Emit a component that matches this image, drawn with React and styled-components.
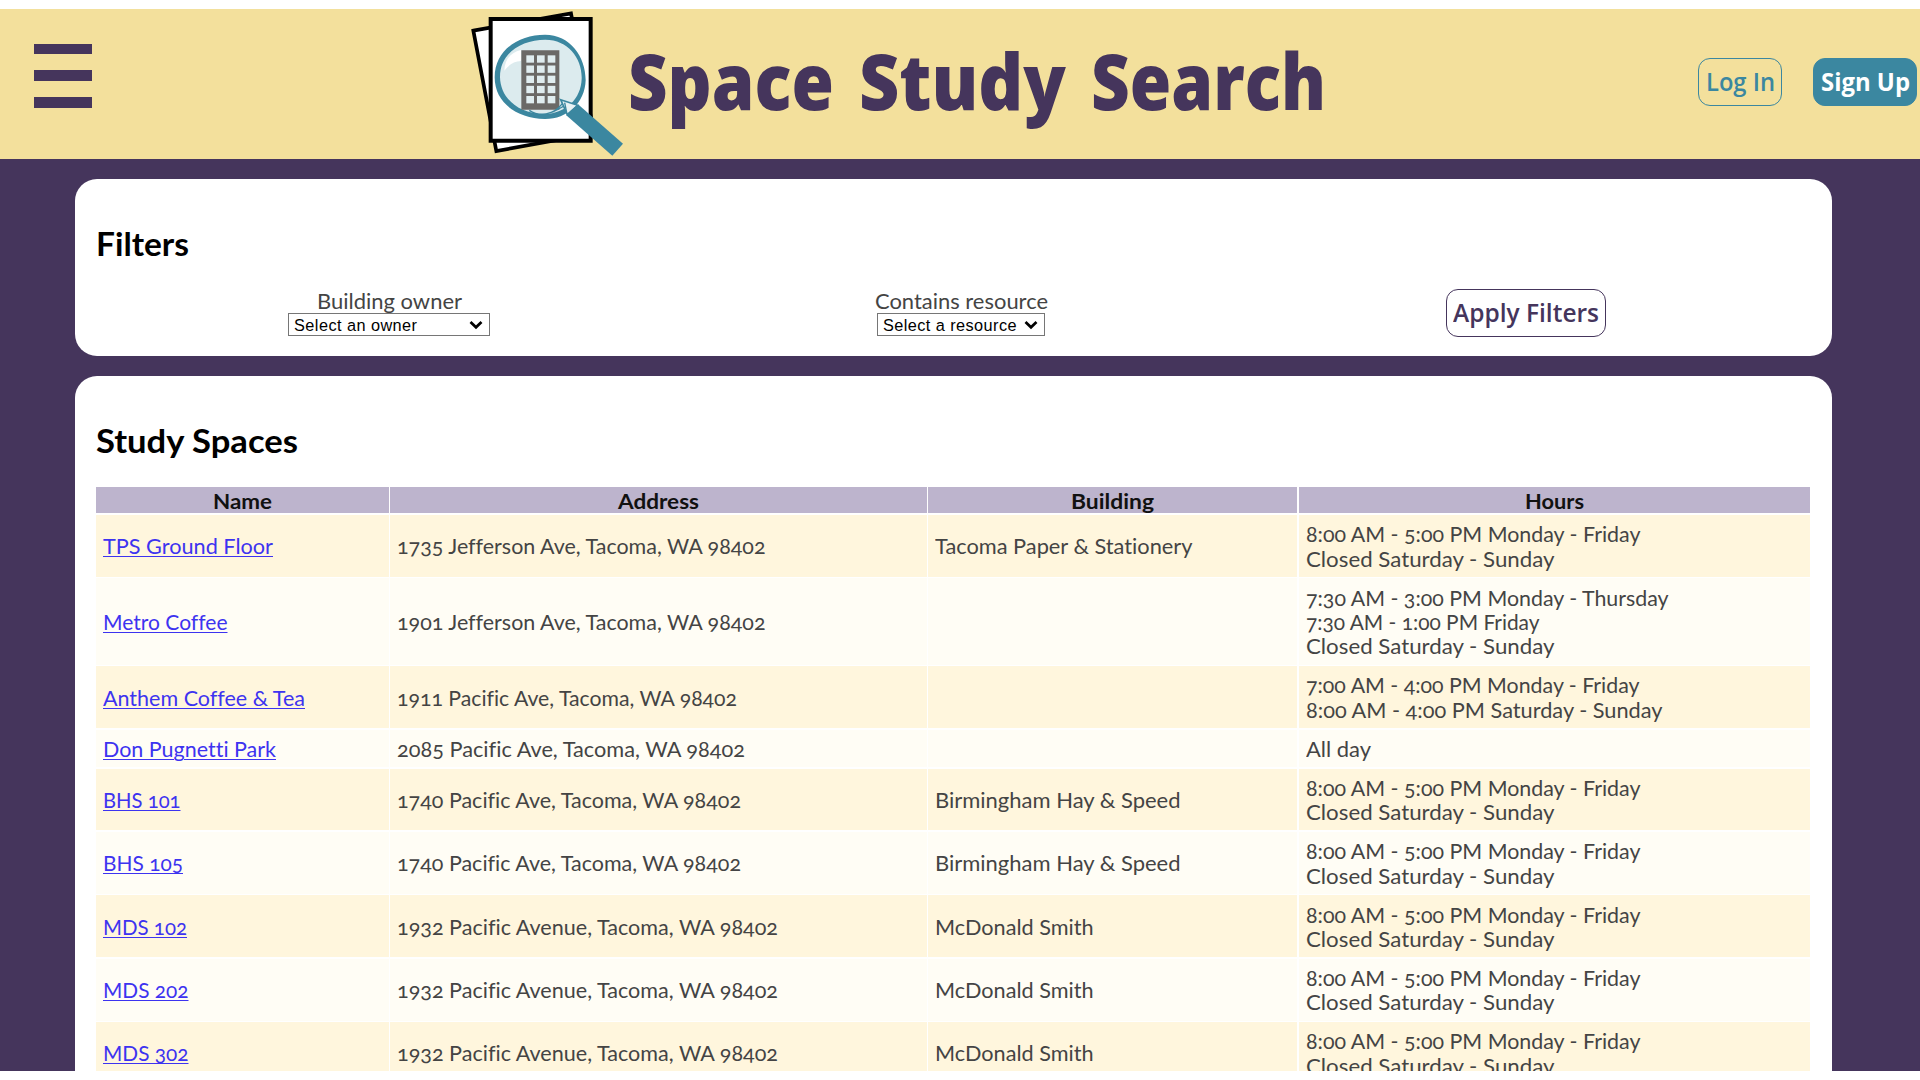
import React, { useLayoutEffect, useRef, useState } from "react";
import styled, { createGlobalStyle } from "styled-components";

const purple = "#45355c";
const teal = "#3b87a0";

const GlobalStyle = createGlobalStyle`
  * { box-sizing: border-box; }
  html, body { margin: 0; background: #fff; overflow: hidden; }
  body { font: 400 20.3px/24.4px Lato, "Liberation Sans", sans-serif; color: #444; font-variant-numeric: oldstyle-nums; font-variant-ligatures: no-common-ligatures; }
`;

const Page = styled.div`
  height: 1080px;
  padding: 9px 0;
  overflow: hidden;
`;

const Header = styled.header`
  display: flex;
  align-items: flex-start;
  height: 149.7px;
  background: #f3e09c;
`;

const MenuButton = styled.div`
  display: flex;
  flex-direction: column;
  justify-content: space-between;
  width: 58px;
  height: 64px;
  margin: 34.6px 0 0 34px;
`;

const MenuBar = styled.span`
  height: 10.3px;
  background: ${purple};
`;

const Logo = styled.svg`
  flex: none;
  width: 160px;
  height: 149px;
  margin-left: 376px;
`;

const Title = styled.h1`
  display: flex;
  gap: 25px;
  width: 1070px;
  margin: 19px 0 0;
  font: 800 78px/104px "Open Sans", "Noto Sans", sans-serif;
  color: ${purple};
`;

const Button = styled.div`
  display: flex;
  flex: none;
  justify-content: center;
  width: ${(p) => p.$width}px;
  height: 48px;
  border: 1.5px solid ${(p) => p.$border};
  border-radius: 12px;
  background: ${(p) => p.$fill || "transparent"};
  color: ${(p) => p.$color};
  font: ${(p) => p.$weight || 600} 25px/45px "Open Sans", "Noto Sans", sans-serif;
`;

const Account = styled.div`
  display: flex;
  gap: 31px;
  margin-top: 49px;
`;

const Main = styled.main`
  display: flex;
  flex-direction: column;
  gap: 20px;
  height: 912.3px;
  padding: 20.3px 88px 0 75px;
  background: ${purple};
  overflow: hidden;
`;

const Card = styled.section`
  flex: none;
  height: ${(p) => p.$height}px;
  padding: 48.3px 21px 0;
  border-radius: 22px;
  background: #fff;
`;

const Heading = styled.h2`
  display: flex;
  margin: 0;
  font: 700 32px/34px Lato, sans-serif;
  color: #000;
`;

const FilterRow = styled.div`
  display: grid;
  grid-template-columns: 586px 558px 572px;
  margin-top: 27.5px;
`;

const Filter = styled.div`
  display: flex;
  flex-direction: column;
  align-items: center;
`;

const Select = styled.div`
  display: flex;
  align-items: center;
  justify-content: space-between;
  width: ${(p) => p.$width}px;
  height: 23px;
  padding: 0 6px 0 5px;
  border: 1.3px solid #767676;
  font: 16.3px/20px "Liberation Sans", Arial, sans-serif;
  color: #000;
`;

const Table = styled.div`
  display: flex;
  flex-direction: column;
  gap: 1.6px;
  width: 1714.5px;
  margin-top: 29.1px;
`;

const Row = styled.div`
  display: grid;
  grid-template-columns: 293.2px 536.2px 369.3px 511.8px;
  gap: 1.3px;
`;

const HeadCell = styled.div`
  display: flex;
  justify-content: center;
  height: 26px;
  background: #bdb4cd;
  color: #111;
  font-weight: 700;
  line-height: 28px;
`;

const Cell = styled.div`
  display: flex;
  flex-direction: column;
  align-items: flex-start;
  justify-content: center;
  padding: 7.2px 7px 5.8px;
  background: ${(p) => (p.$odd ? "#fff6dd" : "#fffdf5")};
`;

const NameLink = styled.a`
  color: #3d33f0;
  text-decoration: underline;
  text-decoration-thickness: 1.3px;
  text-underline-offset: 2px;
`;

const Text = styled.span`
  display: inline-block;
  white-space: pre;
  transform-origin: 0 50%;
  text-decoration: inherit;
`;

/* Sets a line of text to a measure: by tracking, or by stretching the face. */
function Fit({ width, track, children }) {
  const ref = useRef(null);
  const [style, setStyle] = useState({});
  useLayoutEffect(() => {
    const natural = ref.current.getBoundingClientRect().width;
    setStyle(
      track
        ? { letterSpacing: (width - natural) / children.length }
        : { transform: `scaleX(${width / natural})`, marginRight: width - natural }
    );
  }, [width, track, children]);
  return <Text ref={ref} style={style}>{children}</Text>;
}

const Chevron = () => (
  <svg width="14" height="10" viewBox="0 0 14 10">
    <path d="M1.5 2l5.500 5.300 5.500-5.300" fill="none" stroke="#000" strokeWidth="2.700" />
  </svg>
);

const weekdays = ["8:00 AM - 5:00 PM Monday - Friday", 334.5];
const closed = ["Closed Saturday - Sunday", 248.5];
const bhs = ["1740 Pacific Ave, Tacoma, WA 98402", 344];
const mds = ["1932 Pacific Avenue, Tacoma, WA 98402", 381];
const hay = ["Birmingham Hay & Speed", 245.5];
const smith = ["McDonald Smith", 158.5];

const spaces = [
  { name: ["TPS Ground Floor", 170], address: ["1735 Jefferson Ave, Tacoma, WA 98402", 368.5], building: ["Tacoma Paper & Stationery", 257.5], hours: [weekdays, closed] },
  { name: ["Metro Coffee", 124.5], address: ["1901 Jefferson Ave, Tacoma, WA 98402", 368.5], hours: [["7:30 AM - 3:00 PM Monday - Thursday", 362.5], ["7:30 AM - 1:00 PM Friday", 233.5], closed] },
  { name: ["Anthem Coffee & Tea", 202], address: ["1911 Pacific Ave, Tacoma, WA 98402", 340], hours: [["7:00 AM - 4:00 PM Monday - Friday", 333.5], ["8:00 AM - 4:00 PM Saturday - Sunday", 356.5]] },
  { name: ["Don Pugnetti Park", 173], address: ["2085 Pacific Ave, Tacoma, WA 98402", 348], hours: [["All day", 65]] },
  { name: ["BHS 101", 77.5], address: bhs, building: hay, hours: [weekdays, closed] },
  { name: ["BHS 105", 80], address: bhs, building: hay, hours: [weekdays, closed] },
  { name: ["MDS 102", 84], address: mds, building: smith, hours: [weekdays, closed] },
  { name: ["MDS 202", 85.5], address: mds, building: smith, hours: [weekdays, closed] },
  { name: ["MDS 302", 85.5], address: mds, building: smith, hours: [weekdays, closed] },
];

const Line = ({ item }) => <Fit width={item[1]}>{item[0]}</Fit>;

const windows = [0, 1, 2, 3, 4].flatMap((r) => [0, 1, 2].map((c) => [229 + c * 32, 166 + r * 30.5]));

export default function App() {
  return (
    <Page>
      <GlobalStyle />
      <Header>
        <MenuButton><MenuBar /><MenuBar /><MenuBar /></MenuButton>
        <Logo viewBox="54 27 480 447">
          <path d="M70 92L363 40 432 400 139 453Z" fill="#fff" stroke="#000" strokeWidth="11" />
          <path d="M122 57H422V422H122Z" fill="#fff" stroke="#000" strokeWidth="12" />
          <path d="M142 232C142 150 212 111 284 111C360 111 400 174 400 236C400 306 350 349 284 350C207 350 142 306 142 232Z" fill="#dcebee" />
          <path d="M163 212C164 180 180 158 213 150V183C192 184 178 193 163 212Z" fill="#fff" />
          <path fillRule="evenodd" d="M134 232C134 148 209 104 285 104C361 104 407 170 407 240C405 310 350 358 284 357C203 355 134 310 134 232ZM150 231C151 296 208 343 283 342C349 340 393 296 395 236C397 176 355 119 286 119C216 119 150 158 150 231Z" fill={teal} />
          <path d="M214 151H328V329H214Z" fill="#6b6967" />
          {windows.map(([x, y]) => <rect key={`${x}-${y}`} x={x} y={y} width="23" height="22" fill="#e0edf0" />)}
          <path d="M238 331C270 352 310 345 337 311M265 343C298 344 322 330 342 318" fill="none" stroke={teal} strokeWidth="4" />
          <path d="M332 299L383 316 352 344Z" fill="#e8f2f4" stroke={teal} strokeWidth="5" />
          <path d="M344 308L350 338" stroke={teal} strokeWidth="4" />
          <path d="M384 313L519 431 487 467 348 345Z" fill={teal} />
        </Logo>
        <Title>
          <Fit width={206}>Space</Fit>
          <Fit width={207}>Study</Fit>
          <Fit width={235}>Search</Fit>
        </Title>
        <Account>
          <Button $width={84} $border={teal} $color={teal}><Fit width={69}>Log In</Fit></Button>
          <Button $width={104} $border={teal} $fill={teal} $color="#fff" $weight={700}><Fit width={89}>Sign Up</Fit></Button>
        </Account>
      </Header>
      <Main>
        <Card $height={177}>
          <Heading><Fit width={93}>Filters</Fit></Heading>
          <FilterRow>
            <Filter>
              <Fit width={145}>Building owner</Fit>
              <Select $width={202}><Fit track width={123.5}>Select an owner</Fit><Chevron /></Select>
            </Filter>
            <Filter>
              <Fit width={173}>Contains resource</Fit>
              <Select $width={168}><Fit track width={134}>Select a resource</Fit><Chevron /></Select>
            </Filter>
            <Filter>
              <Button $width={160} $border={purple} $color={purple}><Fit width={146}>Apply Filters</Fit></Button>
            </Filter>
          </FilterRow>
        </Card>
        <Card $height={800}>
          <Heading><Fit width={202}>Study Spaces</Fit></Heading>
          <Table>
            <Row>
              <HeadCell><Fit width={59}>Name</Fit></HeadCell>
              <HeadCell><Fit width={81}>Address</Fit></HeadCell>
              <HeadCell><Fit width={83}>Building</Fit></HeadCell>
              <HeadCell><Fit width={59}>Hours</Fit></HeadCell>
            </Row>
            {spaces.map((s, i) => (
              <Row key={s.name[0]}>
                <Cell $odd={i % 2 === 0}><NameLink><Line item={s.name} /></NameLink></Cell>
                <Cell $odd={i % 2 === 0}><Line item={s.address} /></Cell>
                <Cell $odd={i % 2 === 0}>{s.building && <Line item={s.building} />}</Cell>
                <Cell $odd={i % 2 === 0}>{s.hours.map((h) => <Line key={h[0]} item={h} />)}</Cell>
              </Row>
            ))}
          </Table>
        </Card>
      </Main>
    </Page>
  );
}
